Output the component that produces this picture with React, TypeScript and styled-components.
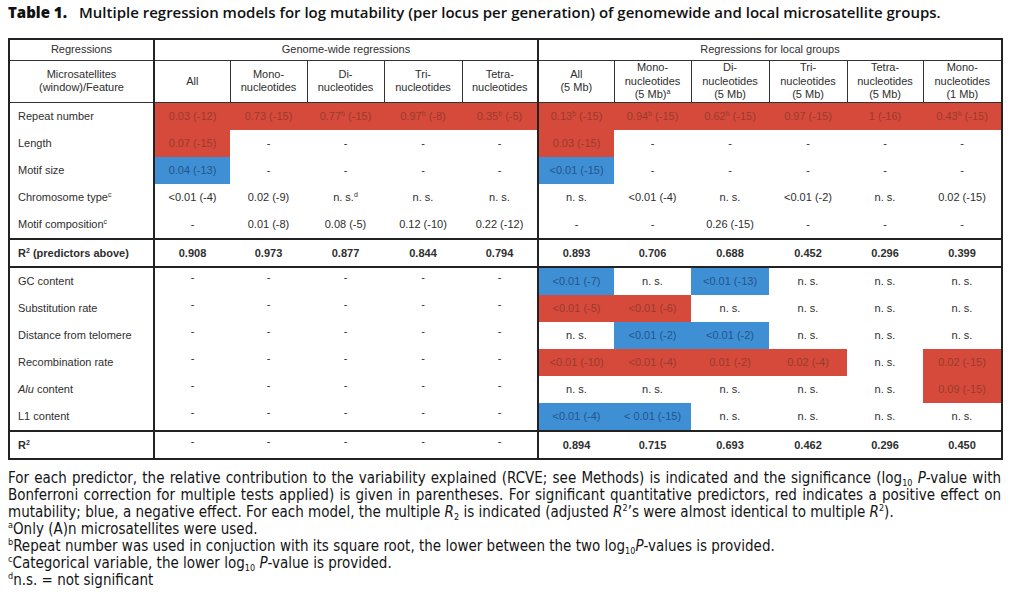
import React from 'react';
import styled, { createGlobalStyle } from 'styled-components';

type Tone = 'red' | 'blue' | undefined;

interface CellData {
  v: React.ReactNode;
  tone?: Tone;
}

interface RowData {
  label: React.ReactNode;
  cells: CellData[];
  total?: boolean;
}

const GlobalStyle = createGlobalStyle`
  body {
    margin: 0;
    background: #fff;
  }
`;

const Page = styled.div`
  width: 1024px;
  height: 596px;
  box-sizing: border-box;
  padding: 3px 8px 0 8px;
  overflow: hidden;
  background: #fff;
`;

const Title = styled.h1`
  margin: 0;
  font-family: "Open Sans", sans-serif;
  font-size: 15px;
  font-weight: 600;
  line-height: 18px;
  color: #111;
  white-space: nowrap;
`;

const TableNo = styled.span`
  font-weight: 800;
  margin-right: 12px;
`;

const Grid = styled.table`
  margin-top: 17px;
  width: 993px;
  table-layout: fixed;
  border-collapse: collapse;
  border: 2px solid #222;
  font-family: "Liberation Sans", Arial, sans-serif;
  font-size: 11px;
  color: #2e2e2e;
`;

const HeadCell = styled.th<{ $major?: boolean; $tall?: boolean }>`
  font-weight: normal;
  text-align: center;
  vertical-align: middle;
  padding: 0 2px;
  line-height: 13.5px;
  height: ${({ $tall }) => ($tall ? 39 : 20)}px;
  border: 1px solid #333;
  border-left: ${({ $major }) => ($major ? '2px solid #222' : '1px solid #333')};
`;

const Row = styled.tr<{ $total?: boolean }>`
  border-top: ${({ $total }) => ($total ? '2px solid #222' : 'none')};
  border-bottom: ${({ $total }) => ($total ? '2px solid #222' : 'none')};
  font-weight: ${({ $total }) => ($total ? 'bold' : 'normal')};
`;

const Label = styled.td<{ $total?: boolean }>`
  height: ${({ $total }) => ($total ? 26 : 27)}px;
  padding: 0 0 0 8px;
  text-align: left;
  border-right: 2px solid #222;
  white-space: nowrap;
`;

const Cell = styled.td<{ $tone?: Tone; $major?: boolean; $raised?: boolean }>`
  padding: 0;
  text-align: center;
  vertical-align: ${({ $raised }) => ($raised ? 'top' : 'middle')};
  padding-top: ${({ $raised }) => ($raised ? 3 : 0)}px;
  white-space: nowrap;
  border-left: ${({ $major }) => ($major ? '2px solid #222' : 'none')};
  background: ${({ $tone }) =>
    $tone === 'red' ? '#d54a3b' : $tone === 'blue' ? '#3f8fd5' : 'transparent'};
  color: ${({ $tone }) =>
    $tone === 'red' ? '#9a3a2e' : $tone === 'blue' ? '#24558a' : 'inherit'};
`;

const Sup = styled.sup`
  font-size: 7px;
  line-height: 0;
  vertical-align: 4px;
`;

const Notes = styled.div`
  margin-top: 10px;
  width: 993px;
  font-family: "Liberation Sans Narrow", "DejaVu Sans Condensed", sans-serif;
  font-size: 15px;
  line-height: 17px;
  color: #141414;
`;

const NoteLine = styled.div<{ $justify?: boolean }>`
  text-align: ${({ $justify }) => ($justify ? 'justify' : 'left')};
  text-align-last: ${({ $justify }) => ($justify ? 'justify' : 'auto')};
`;

const NoteSup = styled.sup`
  font-size: 9px;
  line-height: 0;
  vertical-align: 6px;
`;

const Sub = styled.sub`
  font-size: 9px;
  line-height: 0;
  vertical-align: -3px;
`;

const widths = [145, 76, 77, 77, 78, 76, 76, 77, 78, 78, 76, 79];

const r = (v: React.ReactNode): CellData => ({ v, tone: 'red' });
const b = (v: React.ReactNode): CellData => ({ v, tone: 'blue' });
const n = (v: React.ReactNode): CellData => ({ v });
const bSup = (a: string, p: string) => (
  <>
    {a}
    <Sup>b</Sup> {p}
  </>
);

const topRows: RowData[] = [
  {
    label: 'Repeat number',
    cells: [
      r('0.03 (-12)'), r('0.73 (-15)'), r(bSup('0.77', '(-15)')), r(bSup('0.97', '(-8)')), r(bSup('0.35', '(-5)')),
      r(bSup('0.13', '(-15)')), r(bSup('0.94', '(-15)')), r(bSup('0.62', '(-15)')), r('0.97 (-15)'), r('1 (-16)'), r(bSup('0.43', '(-15)')),
    ],
  },
  {
    label: 'Length',
    cells: [r('0.07 (-15)'), n('-'), n('-'), n('-'), n('-'), r('0.03 (-15)'), n('-'), n('-'), n('-'), n('-'), n('-')],
  },
  {
    label: 'Motif size',
    cells: [b('0.04 (-13)'), n('-'), n('-'), n('-'), n('-'), b('<0.01 (-15)'), n('-'), n('-'), n('-'), n('-'), n('-')],
  },
  {
    label: <>Chromosome type<Sup>c</Sup></>,
    cells: [
      n('<0.01 (-4)'), n('0.02 (-9)'), n(<>n. s.<Sup>d</Sup></>), n('n. s.'), n('n. s.'),
      n('n. s.'), n('<0.01 (-4)'), n('n. s.'), n('<0.01 (-2)'), n('n. s.'), n('0.02 (-15)'),
    ],
  },
  {
    label: <>Motif composition<Sup>c</Sup></>,
    cells: [
      n('-'), n('0.01 (-8)'), n('0.08  (-5)'), n('0.12 (-10)'), n('0.22 (-12)'),
      n('-'), n('-'), n('0.26 (-15)'), n('-'), n('-'), n('-'),
    ],
  },
  {
    label: <>R<Sup>2</Sup> (predictors above)</>,
    total: true,
    cells: ['0.908', '0.973', '0.877', '0.844', '0.794', '0.893', '0.706', '0.688', '0.452', '0.296', '0.399'].map(n),
  },
];

const dashes = ['-', '-', '-', '-', '-'];

const lowerRows: RowData[] = [
  { label: 'GC content', cells: [b('<0.01 (-7)'), n('n. s.'), b('<0.01 (-13)'), n('n. s.'), n('n. s.'), n('n. s.')] },
  { label: 'Substitution rate', cells: [r('<0.01 (-5)'), r('<0.01 (-6)'), n('n. s.'), n('n. s.'), n('n. s.'), n('n. s.')] },
  { label: 'Distance from telomere', cells: [n('n. s.'), b('<0.01 (-2)'), b('<0.01 (-2)'), n('n. s.'), n('n. s.'), n('n. s.')] },
  { label: 'Recombination rate', cells: [r('<0.01 (-10)'), r('<0.01 (-4)'), r('0.01 (-2)'), r('0.02 (-4)'), n('n. s.'), r('0.02 (-15)')] },
  { label: <><i>Alu</i> content</>, cells: [n('n. s.'), n('n. s.'), n('n. s.'), n('n. s.'), n('n. s.'), r('0.09 (-15)')] },
  { label: 'L1 content', cells: [b('<0.01 (-4)'), b('< 0.01 (-15)'), n('n. s.'), n('n. s.'), n('n. s.'), n('n. s.')] },
  {
    label: <>R<Sup>2</Sup></>,
    total: true,
    cells: ['0.894', '0.715', '0.693', '0.462', '0.296', '0.450'].map(n),
  },
];

const TopRow: React.FC<{ row: RowData }> = ({ row }) => (
  <Row $total={row.total}>
    <Label $total={row.total}>{row.label}</Label>
    {row.cells.map((c, i) => (
      <Cell key={i} $tone={c.tone} $major={i === 5}>
        {c.v}
      </Cell>
    ))}
  </Row>
);

const LowerRow: React.FC<{ row: RowData }> = ({ row }) => (
  <Row $total={row.total}>
    <Label $total={row.total}>{row.label}</Label>
    {dashes.map((d, i) => (
      <Cell key={`g${i}`} $raised>
        <span style={{ fontWeight: 'normal' }}>{d}</span>
      </Cell>
    ))}
    {row.cells.map((c, i) => (
      <Cell key={i} $tone={c.tone} $major={i === 0}>
        {c.v}
      </Cell>
    ))}
  </Row>
);

const localHeads = [
  ['All', '(5 Mb)'],
  ['Mono-', 'nucleotides', '(5 Mb)a'],
  ['Di-', 'nucleotides', '(5 Mb)'],
  ['Tri-', 'nucleotides', '(5 Mb)'],
  ['Tetra-', 'nucleotides', '(5 Mb)'],
  ['Mono-', 'nucleotides', '(1 Mb)'],
];

const genomeHeads = [['All'], ['Mono-', 'nucleotides'], ['Di-', 'nucleotides'], ['Tri-', 'nucleotides'], ['Tetra-', 'nucleotides']];

const headLines = (lines: string[]) =>
  lines.map((l, i) => (
    <React.Fragment key={i}>
      {i > 0 && <br />}
      {l.endsWith(')a') ? (
        <>
          {l.slice(0, -1)}
          <Sup>a</Sup>
        </>
      ) : (
        l
      )}
    </React.Fragment>
  ));

export default function App() {
  return (
    <Page>
      <GlobalStyle />
      <Title>
        <TableNo>Table 1.</TableNo>
        Multiple regression models for log mutability (per locus per generation) of genomewide and local microsatellite groups.
      </Title>
      <Grid>
        <colgroup>
          {widths.map((w, i) => (
            <col key={i} style={{ width: w }} />
          ))}
        </colgroup>
        <thead>
          <tr>
            <HeadCell>Regressions</HeadCell>
            <HeadCell colSpan={5} $major>Genome-wide regressions</HeadCell>
            <HeadCell colSpan={6} $major>Regressions for local groups</HeadCell>
          </tr>
          <tr>
            <HeadCell $tall>
              Microsatellites
              <br />
              (window)/Feature
            </HeadCell>
            {genomeHeads.map((h, i) => (
              <HeadCell key={i} $tall $major={i === 0}>
                {headLines(h)}
              </HeadCell>
            ))}
            {localHeads.map((h, i) => (
              <HeadCell key={i} $tall $major={i === 0}>
                {headLines(h)}
              </HeadCell>
            ))}
          </tr>
        </thead>
        <tbody>
          {topRows.map((row, i) => (
            <TopRow key={i} row={row} />
          ))}
          {lowerRows.map((row, i) => (
            <LowerRow key={i} row={row} />
          ))}
        </tbody>
      </Grid>
      <Notes>
        <NoteLine $justify>
          For each predictor, the relative contribution to the variability explained (RCVE; see Methods) is indicated and the significance (log<Sub>10</Sub> <i>P</i>-value with
        </NoteLine>
        <NoteLine $justify>
          Bonferroni correction for multiple tests applied) is given in parentheses. For significant quantitative predictors, red indicates a positive effect on
        </NoteLine>
        <NoteLine>
          mutability; blue, a negative effect. For each model, the multiple <i>R</i>
          <Sub>2</Sub> is indicated (adjusted <i>R</i>
          <NoteSup>2</NoteSup>’s were almost identical to multiple <i>R</i>
          <NoteSup>2</NoteSup>).
        </NoteLine>
        <NoteLine>
          <NoteSup>a</NoteSup>Only (A)n microsatellites were used.
        </NoteLine>
        <NoteLine>
          <NoteSup>b</NoteSup>Repeat number was used in conjuction with its square root, the lower between the two log<Sub>10</Sub>
          <i>P</i>-values is provided.
        </NoteLine>
        <NoteLine>
          <NoteSup>c</NoteSup>Categorical variable, the lower log<Sub>10</Sub> <i>P</i>-value is provided.
        </NoteLine>
        <NoteLine>
          <NoteSup>d</NoteSup>n.s. = not significant
        </NoteLine>
      </Notes>
    </Page>
  );
}
